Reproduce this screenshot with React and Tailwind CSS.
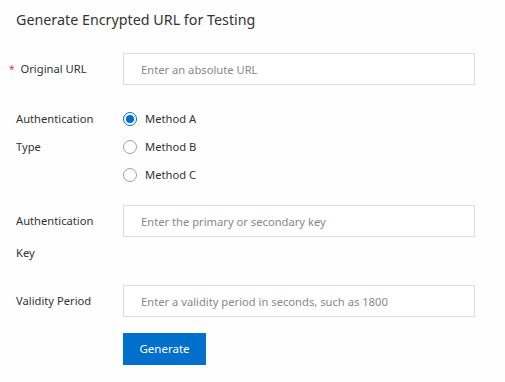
import React, { useState } from "react";

const font = { fontFamily: '"Noto Sans", "Open Sans", sans-serif' };

const methods = ["Method A", "Method B", "Method C"];

const Row = ({ label, required, children, className = "" }) => (
  <div className={`flex ${className}`}>
    <div className="w-[123px] shrink-0 pl-4 pr-2 text-[11.2px] text-[#333]">
      {required && <span className="-ml-[7px] mr-[6px] text-[10px] text-[#e4393c]">*</span>}
      {label}
    </div>
    <div className="flex-1">{children}</div>
  </div>
);

const Input = ({ placeholder }) => (
  <input
    className="h-8 w-[352px] border border-[#dcdcdc] bg-white px-[17px] text-[11.2px] text-[#333] placeholder:text-[#888] outline-none"
    placeholder={placeholder}
  />
);

export default function App() {
  const [method, setMethod] = useState("Method A");

  return (
    <div className="min-h-screen w-[505px] bg-[#fefefe]" style={font}>
      <h1 className="px-4 pt-2 text-[14.3px] leading-6 text-[#333]">Generate Encrypted URL for Testing</h1>

      {/* Original URL */}
      <Row label="Original URL" required className="mt-[21px] items-center">
        <Input placeholder="Enter an absolute URL" />
      </Row>

      {/* Authentication Type */}
      <Row label={<span className="block leading-[28px]">Authentication Type</span>} className="mt-[20px]">
        <div className="flex flex-col">
          {methods.map((m) => (
            <label key={m} className="flex h-7 cursor-pointer items-center text-[11.2px] text-[#333]">
              <span
                className={`mr-[8px] flex h-[14px] w-[14px] items-center justify-center rounded-full border bg-white ${
                  method === m ? "border-[#0070cc]" : "border-[#a0a0a0]"
                }`}
                onClick={() => setMethod(m)}
              >
                {method === m && <span className="h-[8px] w-[8px] rounded-full bg-[#0070cc]" />}
              </span>
              {m}
            </label>
          ))}
        </div>
      </Row>

      {/* Authentication Key */}
      <Row label={<span className="block leading-[32px]">Authentication Key</span>} className="mt-4">
        <Input placeholder="Enter the primary or secondary key" />
      </Row>

      {/* Validity Period */}
      <Row label="Validity Period" className="mt-4 items-center">
        <Input placeholder="Enter a validity period in seconds, such as 1800" />
      </Row>

      <div className="mt-4 pl-[123px]">
        <button className="h-8 w-[83px] bg-[#0070cc] text-[11.5px] text-white">Generate</button>
      </div>
    </div>
  );
}
